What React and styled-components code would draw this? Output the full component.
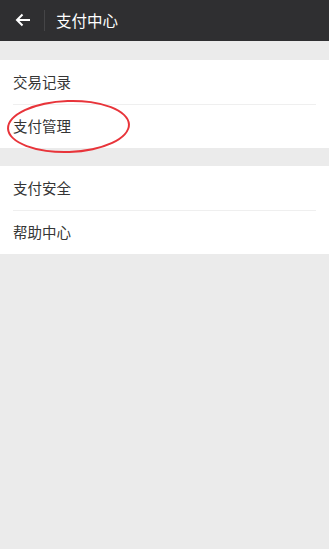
import React from "react";
import styled, { createGlobalStyle } from "styled-components";

const GlobalStyle = createGlobalStyle`
  html, body {
    margin: 0;
    padding: 0;
    background: #ebebeb;
    font-family: "Noto Sans CJK SC", "Noto Sans", sans-serif;
  }
`;

const GROUPS = [
  ["交易记录", "支付管理"],
  ["支付安全", "帮助中心"],
];

let App = () => {
  return (
    <Page>
      <GlobalStyle />
      <Header>
        <BackButton>
          <svg width="16" height="14" viewBox="0 0 16 14">
            <path
              d="M15 7H2M7.5 1.5L2 7l5.5 5.5"
              fill="none"
              stroke="#fff"
              strokeWidth="2"
            />
          </svg>
        </BackButton>
        <Divider />
        <Title>支付中心</Title>
      </Header>
      {GROUPS.map((group, i) => (
        <Group key={i}>
          {group.map((label) => (
            <Row key={label}>
              {label}
              {label === "支付管理" && <Circle />}
            </Row>
          ))}
        </Group>
      ))}
    </Page>
  );
};

const Page = styled.div`
  min-height: 549px;
  background: #ebebeb;
`;

const Header = styled.div`
  display: flex;
  align-items: center;
  height: 41px;
  padding-bottom: 1px;
  box-sizing: border-box;
  background: #2f2f31;
`;

const BackButton = styled.div`
  display: flex;
  align-items: center;
  justify-content: center;
  width: 44px;
  height: 100%;
  padding-left: 1px;
  box-sizing: border-box;
`;

const Divider = styled.div`
  width: 1px;
  height: 21px;
  background: #454547;
`;

const Title = styled.div`
  margin-left: 11px;
  color: #fff;
  font-size: 15.5px;
  font-weight: 400;
`;

const Group = styled.div`
  margin-top: 19px;
  padding-left: 13px;
  background: #fff;

  & + & {
    margin-top: 18px;
  }
`;

const Row = styled.div`
  position: relative;
  display: flex;
  align-items: center;
  box-sizing: border-box;
  height: 44px;
  padding-bottom: 2px;
  margin-right: 13px;
  color: #353535;
  font-size: 14.5px;

  & + & {
    border-top: 1px solid #efefef;
  }
`;

const Circle = styled.div`
  position: absolute;
  left: -6px;
  top: -5px;
  width: 119px;
  height: 49px;
  border: 2px solid #e8343a;
  border-radius: 50%;
  transform: rotate(-2deg);
  pointer-events: none;
`;

export default App;
